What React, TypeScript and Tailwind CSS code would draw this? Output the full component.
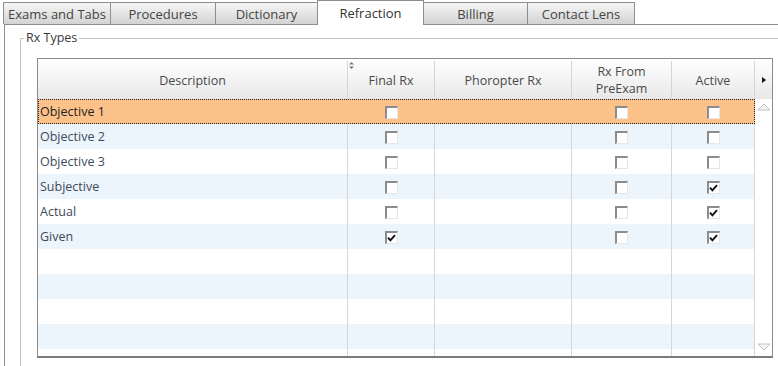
import React from 'react';

type RxRow = {
  name: string;
  finalRx: boolean;
  fromPreExam: boolean;
  active: boolean;
};

const rows: RxRow[] = [
  { name: 'Objective 1', finalRx: false, fromPreExam: false, active: false },
  { name: 'Objective 2', finalRx: false, fromPreExam: false, active: false },
  { name: 'Objective 3', finalRx: false, fromPreExam: false, active: false },
  { name: 'Subjective', finalRx: false, fromPreExam: false, active: true },
  { name: 'Actual', finalRx: false, fromPreExam: false, active: true },
  { name: 'Given', finalRx: true, fromPreExam: false, active: true },
];

const tabs = [
  { label: 'Exams and Tabs', width: 'w-[108px]' },
  { label: 'Procedures', width: 'w-[106px]' },
  { label: 'Dictionary', width: 'w-[103px]' },
  { label: 'Refraction', width: 'w-[107px]', active: true },
  { label: 'Billing', width: 'w-[105px]' },
  { label: 'Contact Lens', width: 'w-[108px]' },
];

function CheckBox({ checked }: { checked: boolean }) {
  return (
    <span className="relative inline-flex items-center justify-center w-[13px] h-[13px] border-t-2 border-l-2 border-r border-b border-t-[#8c8c8c] border-l-[#8c8c8c] border-r-[#e6e6e6] border-b-[#e6e6e6] bg-white">
      {checked && (
        <svg width="9" height="8" viewBox="0 0 9 8" className="block">
          <path d="M1 3.6 L3.4 6.4 L8 1.2" fill="none" stroke="#111" strokeWidth="1.9" />
        </svg>
      )}
    </span>
  );
}

function GridRow({ row, index }: { row?: RxRow; index: number }) {
  const selected = index === 0;
  const bg = selected ? 'bg-[#fdc289]' : index % 2 === 1 ? 'bg-[#ecf4fc]' : 'bg-white';
  const sep = selected ? 'border-r border-transparent' : 'border-r border-[#d7d7d7]';

  return (
    <div
      className={`flex h-[25px] shrink-0 ${bg} ${
        selected ? 'outline-1 outline-dotted outline-[#222] -outline-offset-1' : ''
      }`}
    >
      <div
        className={`w-[310px] ${sep} pl-[2px] pt-[2px] flex items-center text-[12.5px] ${
          selected ? 'text-[#222]' : 'text-[#3e4a59]'
        }`}
      >
        {row?.name}
      </div>
      <div className={`w-[87px] ${sep} pt-[1px] flex items-center justify-center`}>
        {row && <CheckBox checked={row.finalRx} />}
      </div>
      <div className={`w-[137px] ${sep}`} />
      <div className={`w-[100px] ${sep} pt-[1px] flex items-center justify-center`}>
        {row && <CheckBox checked={row.fromPreExam} />}
      </div>
      <div className={`w-[83px] ${sep} pt-[1px] flex items-center justify-center`}>
        {row && <CheckBox checked={row.active} />}
      </div>
    </div>
  );
}

export default function App() {
  return (
    <div className="w-[778px] h-[366px] bg-white overflow-hidden font-['Open_Sans',sans-serif]">
      {/* tab strip */}
      <div className="flex items-end h-[24px] pl-[3px]">
        {tabs.map((tab, i) =>
          tab.active ? (
            <div
              key={tab.label}
              className={`${tab.width} -ml-px h-[25px] -mb-px relative z-10 bg-white border-t border-l border-r border-[#8e8e8e] flex items-center justify-center text-[13px] text-[#333] pt-[1px]`}
            >
              {tab.label}
            </div>
          ) : (
            <div
              key={tab.label}
              className={`${tab.width} ${i > 0 ? '-ml-px' : ''} h-[22px] border-t border-l border-r border-[#8e8e8e] bg-linear-to-b from-[#f6f6f6] to-[#d3d3d3] flex items-center justify-center text-[13px] text-[#444] pt-[3px]`}
            >
              {tab.label}
            </div>
          )
        )}
      </div>

      {/* tab page */}
      <div className="ml-[4px] h-[342px] border-t border-l border-[#8e8e8e]">
        <fieldset className="ml-[15px] mt-[5px] h-[340px] border-t border-l border-[#c4c4c4]">
          <legend className="ml-[3px] px-[2px] text-[12.5px] leading-[16px] text-[#3a3a3a]">Rx Types</legend>

          <div className="ml-[16px] mt-[12px] w-[736px] h-[300px] border border-[#8a8a8a] border-b-2 border-b-[#7a7a7a] flex overflow-hidden">
            <div className="w-[717px] flex flex-col">
              {/* header */}
              <div className="flex h-[40px] shrink-0 bg-linear-to-b from-white to-[#e8e8e8] text-[12.5px] text-[#4a4a4a] leading-[17px] pt-[2px]">
                <div className="w-[310px] border-r border-[#d4d4d4] flex items-center justify-center">Description</div>
                <div className="relative w-[87px] border-r border-[#d4d4d4] flex items-center justify-center">
                  <svg width="5" height="7" viewBox="0 0 5 7" className="absolute left-[1px] top-[1px]">
                    <path d="M2.5 0 L5 2.6 L0 2.6 Z M2.5 7 L5 4.4 L0 4.4 Z" fill="#777" />
                  </svg>
                  Final Rx
                </div>
                <div className="w-[137px] border-r border-[#d4d4d4] flex items-center justify-center">Phoropter Rx</div>
                <div className="w-[100px] border-r border-[#d4d4d4] flex items-center justify-center text-center">
                  Rx From
                  <br />
                  PreExam
                </div>
                <div className="w-[83px] border-r border-[#d4d4d4] flex items-center justify-center">Active</div>
              </div>

              {/* body */}
              <div className="flex flex-col flex-1 overflow-hidden">
                {Array.from({ length: 11 }).map((_, i) => (
                  <GridRow key={i} row={rows[i]} index={i} />
                ))}
              </div>
            </div>

            {/* scroll column */}
            <div className="w-[17px] flex flex-col">
              <div className="h-[40px] shrink-0 bg-linear-to-b from-white to-[#e8e8e8] flex items-center justify-center pt-[2px]">
                <svg width="4" height="6" viewBox="0 0 4 6">
                  <path d="M0 0 L4 3 L0 6 Z" fill="#111" />
                </svg>
              </div>
              <div className="flex-1 bg-white flex flex-col items-center justify-between pt-[4px] pb-[5px]">
                <svg width="14" height="8" viewBox="0 0 14 8">
                  <path d="M1 7 L7 1 L13 7 Z" fill="#f4f4f4" stroke="#c2c2c2" strokeWidth="1" />
                </svg>
                <svg width="14" height="8" viewBox="0 0 14 8">
                  <path d="M1 1 L7 7 L13 1 Z" fill="#f4f4f4" stroke="#c2c2c2" strokeWidth="1" />
                </svg>
              </div>
            </div>
          </div>
        </fieldset>
      </div>
    </div>
  );
}
